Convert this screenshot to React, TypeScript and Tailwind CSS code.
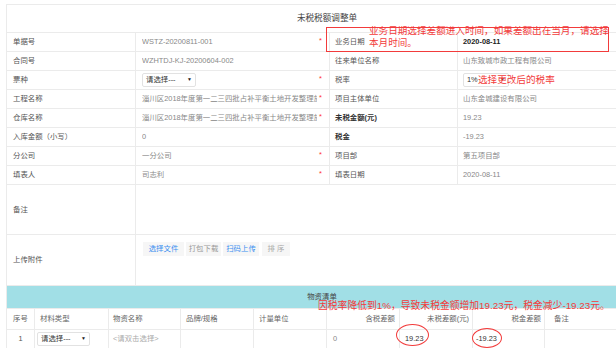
import React from 'react';

interface RowProps {
  l1: string;
  v1: React.ReactNode;
  star?: boolean;
  l2: string;
  v2: React.ReactNode;
  bold?: boolean;
  dark?: boolean;
}

function Row({ l1, v1, star, l2, v2, bold, dark }: RowProps) {
  return (
    <div className="grid grid-cols-[128px_194px_128px_192px] h-[19px] border-t border-[#ebebeb]">
      <div className="flex items-center pl-[6px] text-[#555]">{l1}</div>
      <div className="flex items-center pl-[6px] border-l border-[#ebebeb] text-[#888] min-w-0">
        <div className="flex-1 min-w-0 overflow-hidden whitespace-nowrap">{v1}</div>
        <span className="w-[12px] pl-[2px] text-[#f33] self-start pt-[4px] leading-none">{star ? '*' : ''}</span>
      </div>
      <div className={`flex items-center pl-[5px] border-l border-[#ebebeb] ${bold ? 'font-bold text-[#333]' : 'text-[#555]'}`}>{l2}</div>
      <div className={`flex items-center pl-[5px] border-l border-[#ebebeb] ${dark ? 'text-[#222] font-bold' : 'text-[#888]'}`}>{v2}</div>
    </div>
  );
}

function Select({ text, w }: { text: string; w: string }) {
  return (
    <div className={`flex items-center justify-between h-[14px] ${w} border border-[#e2e2e2] rounded-[2px] bg-white px-[3px] text-[#333]`}>
      <span>{text}</span>
      <span className="text-[5px] text-[#222]">▼</span>
    </div>
  );
}

export default function App() {
  return (
    <div className="relative w-[616px] h-[348px] overflow-hidden bg-white font-['Liberation_Sans','Noto_Sans_CJK_SC',sans-serif] text-[7.4px]">
      <div className="ml-[6px] mt-[4px] w-[642px] border border-[#ebebeb]">
        {/* title */}
        <div className="h-[27px] flex items-center justify-center text-[8.6px] text-[#444]">未税税额调整单</div>

        <Row l1="单据号" v1="WSTZ-20200811-001" star l2="业务日期" v2="2020-08-11" dark />
        <Row l1="合同号" v1="WZHTDJ-KJ-20200604-002" l2="往来单位名称" v2="山东致城市政工程有限公司" />
        <Row l1="票种" v1={<Select text="请选择---" w="w-[54px]" />} star l2="税率" v2={<Select text="1%" w="w-[46px]" />} />
        <Row l1="工程名称" v1="淄川区2018年度第一二三四批占补平衡土地开发整理施工" star l2="项目主体单位" v2="山东金城建设有限公司" />
        <Row l1="仓库名称" v1="淄川区2018年度第一二三四批占补平衡土地开发整理施工" star l2="未税金额(元)" v2="19.23" bold />
        <Row l1="入库金额（小写）" v1="0" l2="税金" v2="-19.23" bold />
        <Row l1="分公司" v1="一分公司" star l2="项目部" v2="第五项目部" />
        <Row l1="填表人" v1="司志利" star l2="填表日期" v2="2020-08-11" />

        {/* remark */}
        <div className="grid grid-cols-[128px_1fr] h-[50px] border-t border-[#ebebeb]">
          <div className="flex items-center pl-[6px] text-[#555]">备注</div>
          <div className="border-l border-[#ebebeb]" />
        </div>

        {/* attachments */}
        <div className="grid grid-cols-[128px_1fr] h-[51px] border-t border-[#ebebeb]">
          <div className="flex items-center pl-[6px] text-[#555]">上传附件</div>
          <div className="border-l border-[#ebebeb] pl-[7px] pt-[7px] flex items-start gap-[2px]">
            <div className="w-[41px] h-[14px] flex items-center justify-center bg-[#f6f6f6] text-[#3b8ff0]">选择文件</div>
            <div className="w-[35px] h-[14px] flex items-center justify-center bg-[#f6f6f6] text-[#999]">打包下载</div>
            <div className="w-[36px] h-[14px] flex items-center justify-center bg-[#f6f6f6] text-[#3b8ff0] mr-[1px]">扫码上传</div>
            <div className="w-[28px] h-[14px] flex items-center justify-center bg-[#f6f6f6] text-[#aaa]">排 序</div>
          </div>
        </div>

        {/* materials table */}
        <div className="h-[23px] bg-[#a1dfe6] flex items-center justify-center text-[#444] border-t border-[#ebebeb]">
          <span className="mr-[10px]">物资清单</span>
        </div>
        <div className="grid grid-cols-[27px_74px_72px_73px_73px_73px_73px_72px_1fr] h-[21px] border-t border-[#ebebeb] text-[#666]">
          <div className="flex items-center justify-center">序号</div>
          <div className="flex items-center pl-[5px] border-l border-[#ebebeb]">材料类型</div>
          <div className="flex items-center pl-[4px] border-l border-[#ebebeb]">物资名称</div>
          <div className="flex items-center pl-[5px] border-l border-[#ebebeb]">品牌/规格</div>
          <div className="flex items-center pl-[5px] border-l border-[#ebebeb]">计量单位</div>
          <div className="flex items-center justify-end pr-[4px] border-l border-[#ebebeb]">含税差额</div>
          <div className="flex items-center justify-end pr-[3px] border-l border-[#ebebeb]">未税差额(元)</div>
          <div className="flex items-center justify-end pr-[3px] border-l border-[#ebebeb]">税金差额</div>
          <div className="flex items-center pl-[9px] border-l border-[#ebebeb]">备注</div>
        </div>
        <div className="grid grid-cols-[27px_74px_72px_73px_73px_73px_73px_72px_1fr] h-[19px] border-t border-[#ebebeb] text-[#888]">
          <div className="flex items-center justify-center text-[#555]">1</div>
          <div className="flex items-center pl-[2px] border-l border-[#ebebeb]">
            <Select text="请选择---" w="w-[53px]" />
          </div>
          <div className="flex items-center pl-[4px] border-l border-[#ebebeb] text-[#aaa]">&lt;请双击选择&gt;</div>
          <div className="border-l border-[#ebebeb]" />
          <div className="border-l border-[#ebebeb]" />
          <div className="flex items-center pl-[6px] border-l border-[#ebebeb]">0</div>
          <div className="flex items-center pl-[5px] border-l border-[#ebebeb] text-[#333]">19.23</div>
          <div className="flex items-center pl-[3px] border-l border-[#ebebeb] text-[#333]">-19.23</div>
          <div className="border-l border-[#ebebeb]" />
        </div>
      </div>

      {/* annotations */}
      <div className="absolute left-[326px] top-[27px] w-[283px] h-[25px] border-[1.5px] border-[#f23b3b]" />
      <div className="absolute left-[369px] top-[25px] w-[246px] text-[9.6px] leading-[11.6px] text-[#f23b3b]">
        业务日期选择差额进入时间，如果差额出在当月，请选择本月时间。
      </div>
      <div className="absolute left-[478px] top-[73.5px] text-[9.6px] leading-[12px] text-[#f23b3b] whitespace-nowrap">选择更改后的税率</div>
      <div className="absolute left-[318px] top-[299.5px] text-[9.8px] leading-[12px] text-[#f23b3b] whitespace-nowrap">
        因税率降低到1%，导致未税金额增加19.23元，税金减少-19.23元。
      </div>
      <div className="absolute left-[396px] top-[324px] w-[33px] h-[22px] rounded-[50%] border-[1.5px] border-[#f23b3b]" />
      <div className="absolute left-[472px] top-[328px] w-[30px] h-[20px] rounded-[50%] border-[1.5px] border-[#f23b3b]" />
    </div>
  );
}
